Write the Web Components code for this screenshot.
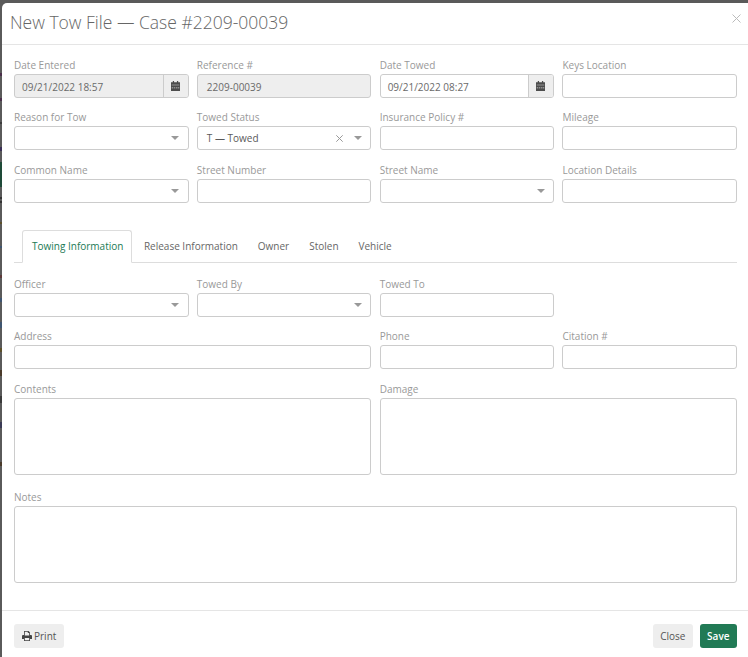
<!DOCTYPE html>
<html><head><meta charset="utf-8"><title>New Tow File</title>
<style>
html,body{margin:0;padding:0;height:657px;overflow:hidden;font-family:"Open Sans",sans-serif}
body{background:#5a5a5a linear-gradient(to bottom,
 #5a5a5a 0 73px,#4a2f4a 73px 76px,#5a5a5a 76px 98px,#4a2f4a 98px 101px,#5a5a5a 101px 122px,#3c3c3c 122px 124px,#5a5a5a 124px 147px,#3a2f55 147px 151px,#5a5a5a 151px 162px,
 #1e4a38 162px 187px,#5a5a5a 187px 197px,#333 197px 199px,#5a5a5a 199px 201px,#333 201px 203px,#5a5a5a 203px 222px,#5c4f2a 222px 224px,#5a5a5a 224px 246px,#3f5570 246px 248px,#5a5a5a 248px 275px,#5c3a3a 275px 278px,#5a5a5a 278px 298px,#3f5570 298px 302px,#5a5a5a 302px 322px,#3f5570 322px 328px,
 #5a5a5a 328px 348px,#5c4f2a 348px 352px,#5a5a5a 352px 370px,#4a3a2a 370px 376px,#5a5a5a 376px 396px,#3a3a3a 396px 403px,#5a5a5a 403px 422px,#3a3a55 422px 428px,#5a5a5a 428px 462px,#4a3a2a 462px 466px,#5a5a5a 466px)}
</style></head><body>
<tow-modal>
  <span slot="title">New Tow File — Case #2209-00039</span>
  <tow-grid>
    <tow-field label="Date Entered"><tow-date value="09/21/2022 18:57" disabled></tow-date></tow-field>
    <tow-field label="Reference #"><tow-input value="2209-00039" disabled></tow-input></tow-field>
    <tow-field label="Date Towed"><tow-date value="09/21/2022 08:27"></tow-date></tow-field>
    <tow-field label="Keys Location"><tow-input></tow-input></tow-field>
    <tow-field label="Reason for Tow"><tow-select></tow-select></tow-field>
    <tow-field label="Towed Status"><tow-select value="T — Towed" clear></tow-select></tow-field>
    <tow-field label="Insurance Policy #"><tow-input></tow-input></tow-field>
    <tow-field label="Mileage"><tow-input></tow-input></tow-field>
    <tow-field label="Common Name"><tow-select></tow-select></tow-field>
    <tow-field label="Street Number"><tow-input></tow-input></tow-field>
    <tow-field label="Street Name"><tow-select></tow-select></tow-field>
    <tow-field label="Location Details"><tow-input></tow-input></tow-field>
  </tow-grid>
  <tow-tabs></tow-tabs>
  <tow-grid>
    <tow-field label="Officer"><tow-select></tow-select></tow-field>
    <tow-field label="Towed By"><tow-select></tow-select></tow-field>
    <tow-field label="Towed To"><tow-input></tow-input></tow-field>
    <span></span>
    <tow-field label="Address" style="grid-column:span 2"><tow-input></tow-input></tow-field>
    <tow-field label="Phone"><tow-input></tow-input></tow-field>
    <tow-field label="Citation #"><tow-input></tow-input></tow-field>
    <tow-field label="Contents" style="grid-column:span 2"><tow-area></tow-area></tow-field>
    <tow-field label="Damage" style="grid-column:span 2"><tow-area></tow-area></tow-field>
    <tow-field label="Notes" style="grid-column:span 4"><tow-area></tow-area></tow-field>
  </tow-grid>
  <tow-button slot="left" icon>Print</tow-button>
  <tow-button slot="right">Close</tow-button>
  <tow-button slot="right" primary>Save</tow-button>
</tow-modal>
<script>
function def(name, html){
  customElements.define(name, class extends HTMLElement{
    connectedCallback(){
      if(this.shadowRoot) return;
      const r=this.attachShadow({mode:'open'});
      r.innerHTML=typeof html==='function'?html(this):html;
    }
  });
}
const esc=s=>(s||'').replace(/&/g,'&amp;').replace(/</g,'&lt;');
const boxCss=`box-sizing:border-box;height:24px;border:1px solid #ccc;border-radius:3px;background:#fff;font:10px/1 "Open Sans",sans-serif;color:#6a6a6a;`;
const cal=`<svg width="9" height="10" viewBox="0 0 10 11" style="margin-right:1px"><path fill="#4d4d4d" d="M2 0h1.4v1.2h3.2V0H8v1.2h2V11H0V1.2h2z"/><path fill="#d8d8d8" d="M.8 4h8.4v.7H.8zM.8 7.2h1.6v.8H.8zm2.4 0h1.6v.8H3.2zm2.4 0h1.6v.8H5.6zm2.2 0h1.4v.8H7.8z"/></svg>`;
const caret=`<svg width="8" height="4" viewBox="0 0 8 4"><path fill="#999" d="M0 0h8L4 4z"/></svg>`;
def('tow-modal',`<style>
:host{display:flex;flex-direction:column;box-sizing:border-box;height:654px;margin:3px 0 0 2px;background:#fff;border-radius:5px 0 0 0;overflow:hidden}
header{flex:none;box-sizing:border-box;height:42px;border-bottom:1px solid #e5e5e5;display:flex;align-items:center;justify-content:space-between;padding:0 7px 0 8px}
h1{margin:0;font:300 17.5px/1 "Open Sans",sans-serif;color:#666;position:relative;top:-.5px}
.x{position:relative;top:-5px;display:block}
main{flex:1;padding:9px 11px 0 12px;min-height:0}
footer{flex:none;box-sizing:border-box;height:47px;border-top:1px solid #e5e5e5;padding:13px 11px 0 12px;display:flex;justify-content:space-between;align-items:flex-start}
.r{display:flex;gap:7px}
</style>
<header><h1><slot name="title"></slot></h1><svg class="x" width="9" height="9" viewBox="0 0 9 9"><path stroke="#bbb" stroke-width="1" fill="none" d="M.5.5l8 8M8.5.5l-8 8"/></svg></header>
<main><slot></slot></main>
<footer><slot name="left"></slot><div class="r"><slot name="right"></slot></div></footer>`);
def('tow-grid',`<style>:host{display:grid;grid-template-columns:repeat(4,minmax(0,1fr));column-gap:8.33px;row-gap:8.4px}</style><slot></slot>`);
def('tow-field',h=>`<style>:host{display:block;min-width:0}
label{display:block;font:10px/13px "Open Sans",sans-serif;color:#999;height:13px;padding:5px 0 2px}</style>
<label>${esc(h.getAttribute('label'))}</label><slot></slot>`);
def('tow-input',h=>`<style>:host{display:block}
div{${boxCss}padding:1px 9px 0;display:flex;align-items:center}
.d{background:#eee}</style><div class="${h.hasAttribute('disabled')?'d':''}">${esc(h.getAttribute('value'))}</div>`);
def('tow-area',`<style>:host{display:block;padding-bottom:2.5px}div{${boxCss}height:77px}</style><div></div>`);
def('tow-date',h=>`<style>:host{display:block}
div{${boxCss}display:flex;align-items:center;overflow:hidden}
.d{background:#eee}
span{flex:1;padding:1px 0 0 7px}
b{flex:none;width:25px;height:100%;background:#eee;border-left:1px solid #ccc;display:flex;align-items:center;justify-content:center;box-sizing:border-box}
</style><div class="${h.hasAttribute('disabled')?'d':''}"><span>${esc(h.getAttribute('value'))}</span><b>${cal}</b></div>`);
def('tow-select',h=>`<style>:host{display:block}
div{${boxCss}display:flex;align-items:center;padding:0 8.5px 0 9px;gap:10.5px}
span{flex:1;color:#5a5a5a}
i{display:block;width:7px;height:7px}
svg{display:block}
</style><div><span>${esc(h.getAttribute('value'))}</span>${h.hasAttribute('clear')?`<i><svg width="7" height="7" viewBox="0 0 7 7"><path stroke="#999" fill="none" d="M.3.3l6.4 6.4M6.7.3L.3 6.7"/></svg></i>`:''}${caret}</div>`);
def('tow-tabs',`<style>:host{display:flex;margin-top:27.2px;margin-bottom:10px;height:33px;box-sizing:border-box;border-bottom:1px solid #ddd;padding-left:8px;font:10px/1 "Open Sans",sans-serif}
a{display:flex;align-items:center;box-sizing:border-box;height:33px;padding:0 10px;color:#666}
.on{color:#217a55;background:#fff;border:1px solid #ddd;border-bottom-color:#fff;border-radius:3px 3px 0 0;padding:0 8px 0 9px}
</style><a class="on">Towing Information</a><a style="padding-left:11.5px">Release Information</a><a>Owner</a><a>Stolen</a><a>Vehicle</a>`);
def('tow-button',h=>{
  const p=h.hasAttribute('primary');
  return `<style>:host{display:block}
button{box-sizing:border-box;height:24px;border:0;border-radius:3px;background:${p?'#217a55':'#eee'};color:${p?'#fff':'#555'};font:${p?600:400} 10px/1 "Open Sans",sans-serif;padding:0 ${h.hasAttribute('icon')?8:p?7.5:7.2}px;display:flex;align-items:center;gap:2px}
</style><button>${h.hasAttribute('icon')?`<svg width="10" height="10" viewBox="0 0 10 10"><path fill="#444" d="M2 0h4.6L8 1.4V4h1a1 1 0 0 1 1 1v3H8v2H2V8H0V5a1 1 0 0 1 1-1h1zm.8.8V4.6h4.4V2H5.8V.8zM2.8 7v2.2h4.4V7z"/></svg>`:''}<slot></slot></button>`;
});
</script>
</body></html>
